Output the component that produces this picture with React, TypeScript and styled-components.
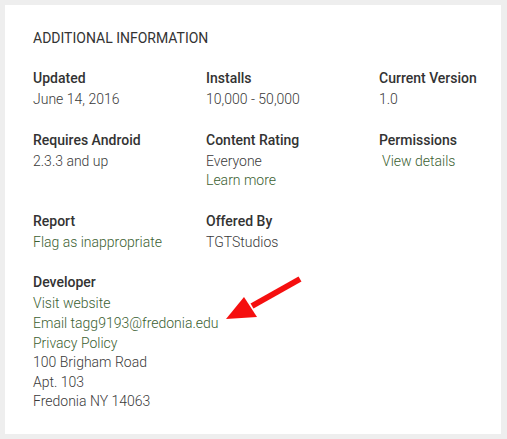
import React from "react";
import styled, { createGlobalStyle } from "styled-components";

const Global = createGlobalStyle`
  html, body { margin: 0; padding: 0; background: #eeeeee; }
  body { font-family: Roboto, "Noto Sans", Arial, sans-serif; -webkit-font-smoothing: antialiased; }
`;

const Page = styled.div`
  padding: 5px 6px 5px 5px;
  width: 507px;
  height: 439px;
  box-sizing: border-box;
`;

const Card = styled.section`
  position: relative;
  background: #ffffff;
  width: 496px;
  height: 429px;
  box-sizing: border-box;
  padding: 23px 0 0 28px;
`;

const Title = styled.h2`
  margin: 0 0 20px 0;
  font-size: 14px;
  font-weight: 400;
  line-height: 20px;
  color: #333333;
  text-transform: uppercase;
  letter-spacing: 0;
`;

const Grid = styled.div`
  display: grid;
  grid-template-columns: 173px 173px 140px;
  row-gap: 20px;
`;

const Item = styled.div`
  display: flex;
  flex-direction: column;
`;

const Label = styled.div`
  font-size: 14px;
  font-weight: 500;
  line-height: 20px;
  color: #333333;
  margin-bottom: 2px;
  white-space: nowrap;
`;

const Value = styled.div<{ $link?: boolean; $indent?: number }>`
  font-size: 14px;
  font-weight: 300;
  line-height: 19.6px;
  color: ${(p) => (p.$link ? "#3b6131" : "#3a3a3a")};
  padding-left: ${(p) => p.$indent ?? 0}px;
  white-space: nowrap;
  cursor: ${(p) => (p.$link ? "pointer" : "default")};
`;

const ArrowSvg = styled.svg`
  position: absolute;
  left: 215px;
  top: 267px;
  overflow: visible;
`;

function Arrow() {
  return (
    <ArrowSvg width="90" height="60" viewBox="0 0 90 60">
      <line x1="80" y1="7" x2="32" y2="34" stroke="#f50f0f" strokeWidth="6" strokeLinecap="butt" />
      <polygon points="6,47 24,25 37,45" fill="#f50f0f" />
    </ArrowSvg>
  );
}

type Entry = { label: string; values: { text: string; link?: boolean; indent?: number }[] };

const entries: Entry[] = [
  { label: "Updated", values: [{ text: "June 14, 2016" }] },
  { label: "Installs", values: [{ text: "10,000 - 50,000" }] },
  { label: "Current Version", values: [{ text: "1.0" }] },
  { label: "Requires Android", values: [{ text: "2.3.3 and up" }] },
  { label: "Content Rating", values: [{ text: "Everyone" }, { text: "Learn more", link: true }] },
  { label: "Permissions", values: [{ text: "View details", link: true, indent: 3 }] },
  { label: "Report", values: [{ text: "Flag as inappropriate", link: true }] },
  { label: "Offered By", values: [{ text: "TGTStudios" }] },
  { label: "", values: [] },
  {
    label: "Developer",
    values: [
      { text: "Visit website", link: true },
      { text: "Email tagg9193@fredonia.edu", link: true },
      { text: "Privacy Policy", link: true },
      { text: "100 Brigham Road" },
      { text: "Apt. 103" },
      { text: "Fredonia NY 14063" },
    ],
  },
];

export default function App() {
  return (
    <>
      <Global />
      <Page>
        <Card>
          <Title>Additional Information</Title>
          <Grid>
            {entries.map((e, i) => (
              <Item key={i}>
                {e.label && <Label>{e.label}</Label>}
                {e.values.map((v, j) => (
                  <Value key={j} $link={v.link} $indent={v.indent}>
                    {v.text}
                  </Value>
                ))}
              </Item>
            ))}
          </Grid>
          <Arrow />
        </Card>
      </Page>
    </>
  );
}
